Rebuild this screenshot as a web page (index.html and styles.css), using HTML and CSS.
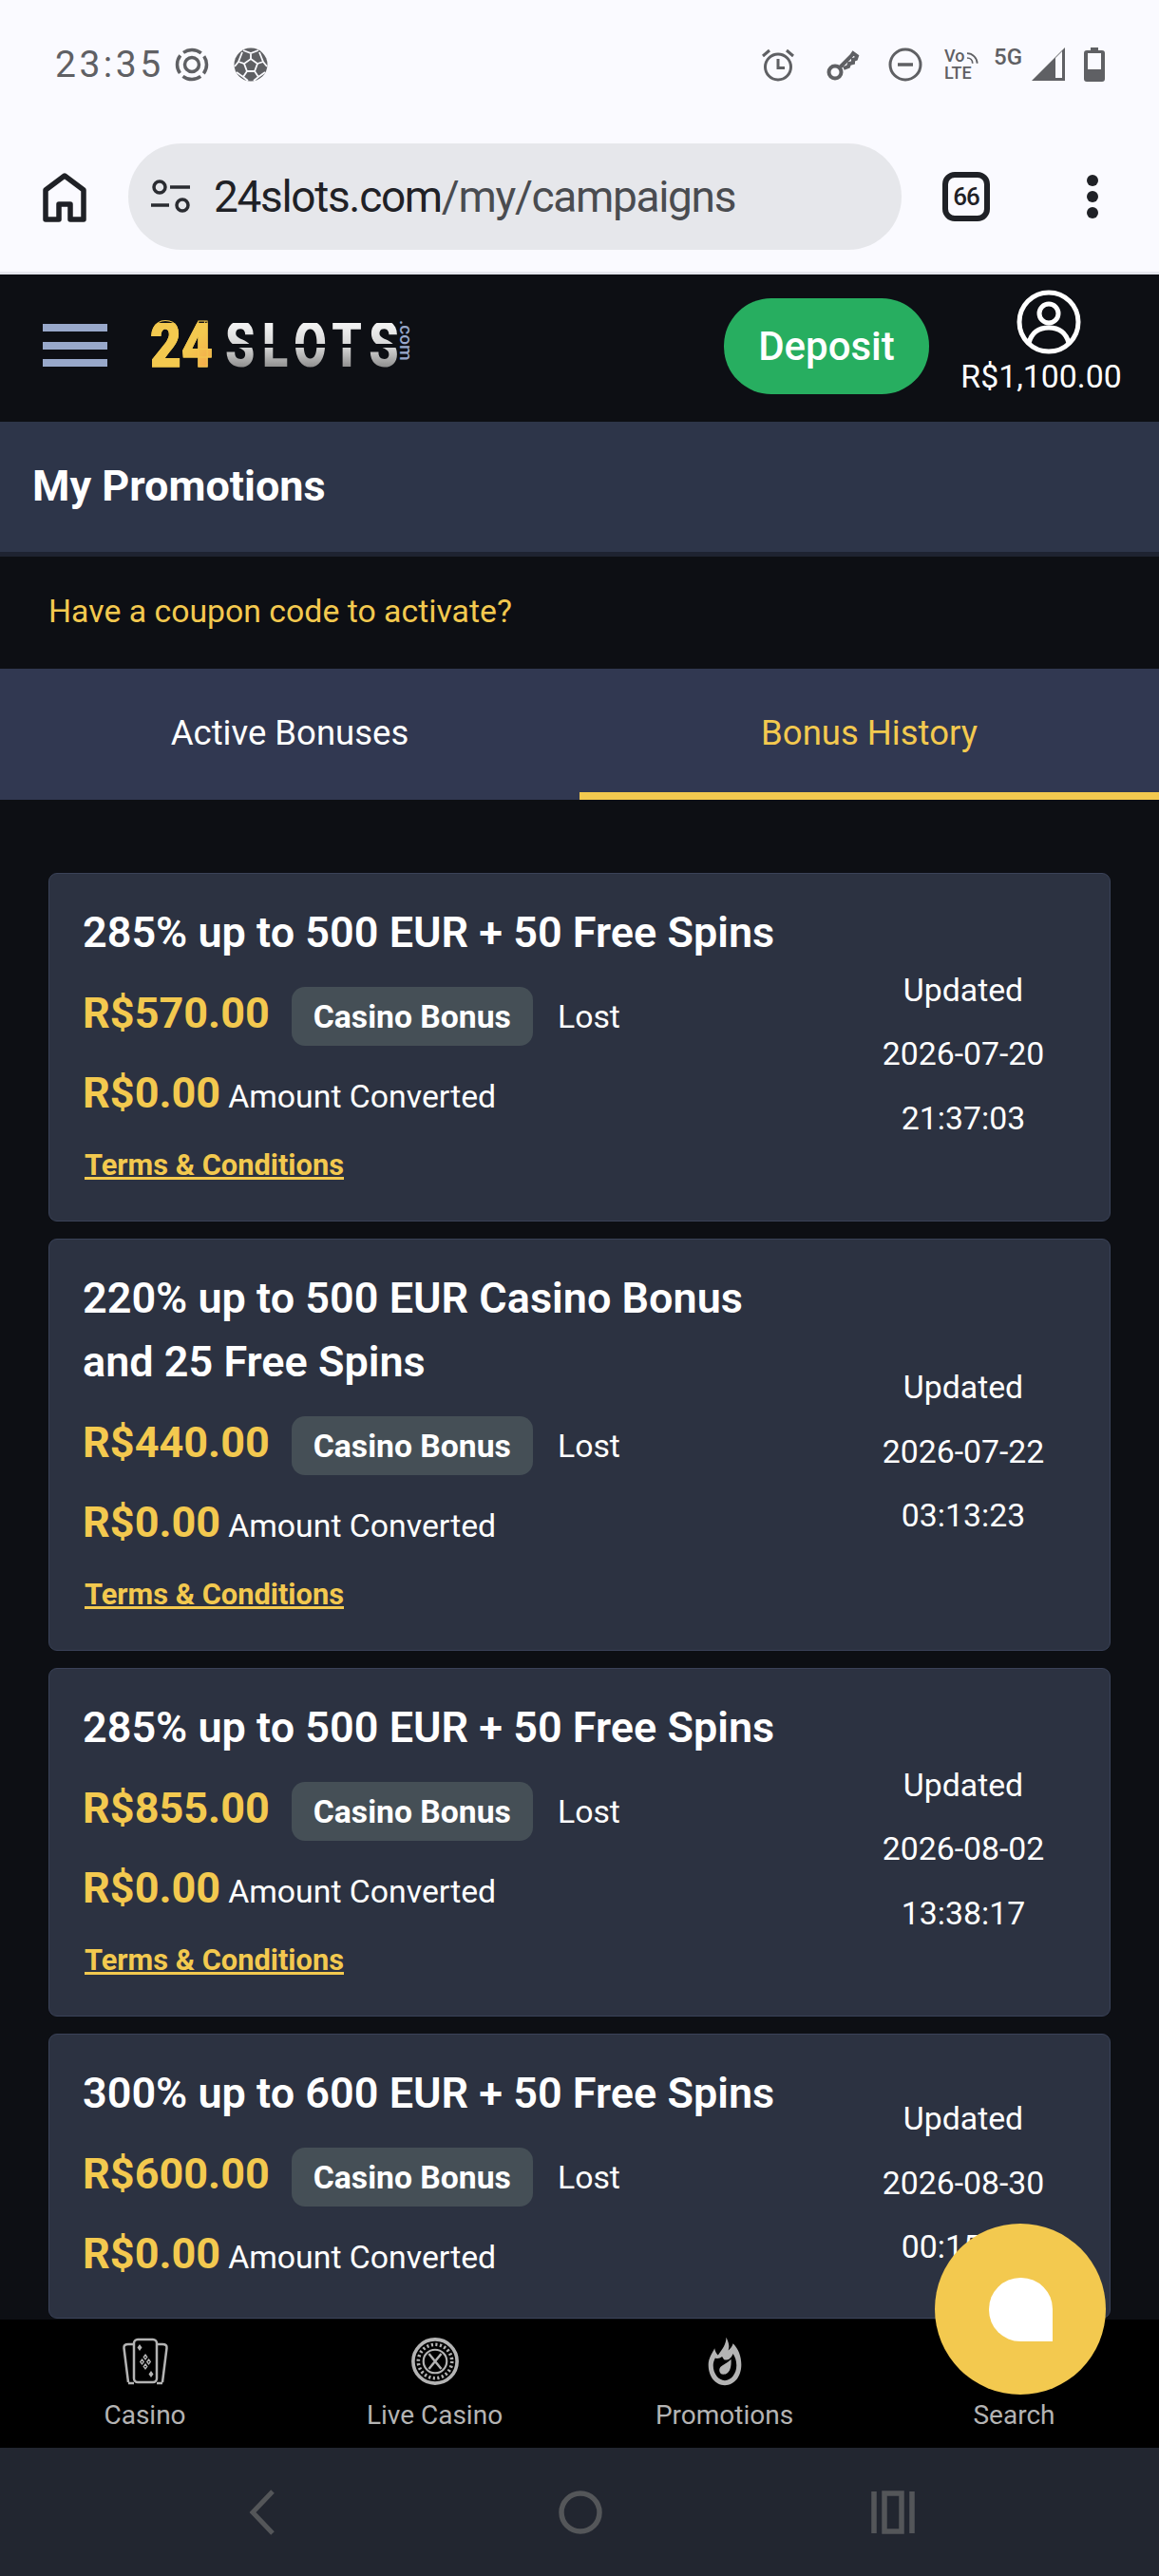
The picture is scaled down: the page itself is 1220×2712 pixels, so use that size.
FILE: index.html
```html
<!DOCTYPE html>
<html lang="en">
<head>
<meta charset="utf-8">
<title>My Promotions</title>
<link rel="stylesheet" href="styles.css">
</head>
<body>
<div class="screen">
  <div class="statusbar">
    <div class="status-left">
      <span class="clock">23:35</span>
      <svg class="si" viewBox="0 0 36 36"><circle cx="18" cy="18" r="15.500" fill="none" stroke="#5f6064" stroke-width="3.500" stroke-dasharray="20 4.350" stroke-dashoffset="10"/><circle cx="18" cy="18" r="7.500" fill="none" stroke="#5f6064" stroke-width="3.500"/></svg>
      <svg class="si ball" viewBox="0 0 36 36"><circle cx="18" cy="18" r="17.500" fill="#5f6064"/><g fill="none" stroke="#fafaff" stroke-width="1.800"><path d="M18 12l7 5-3 8h-8l-3-8z"/><path d="M18 12V6M10 3l8 3 8-3M25 17l6-2M27 5l4 10 4 5M22 25l4 6M33 26l-7 5-5 4M14 25l-4 6M3 26l7 5 5 4M11 17l-6-2M9 5L5 15l-4 5"/></g></svg>
    </div>
    <div class="status-right">
      <svg class="si alarm" viewBox="0 0 36 36" fill="none" stroke="#5f6064" stroke-width="3"><circle cx="18" cy="20.500" r="13.500"/><path d="M18 12v9.500h7M2 9l7-6M34 9l-7-6"/></svg>
      <svg class="si key" viewBox="0 0 36 36" fill="none" stroke="#5f6064" stroke-width="4"><circle cx="10" cy="26" r="6.500"/><path d="M15 21L27 9l2-3 4 3-1 3-3 1v3l-4 1-1 3-5 2"/></svg>
      <svg class="si minus" viewBox="0 0 36 36" fill="none" stroke="#5f6064" stroke-width="3"><circle cx="18" cy="18" r="16"/><path d="M10 18h16" stroke-width="3.500"/></svg>
      <div class="volte"><span class="vo">Vo<svg class="waves" viewBox="0 0 14 14" fill="none" stroke="#5f6064" stroke-width="1.800"><path d="M1 2c6 0 11 5 11 11M1 7c3.500 0 6 2.500 6 6"/></svg></span><span class="lte">LTE</span></div>
      <span class="fiveg">5G</span>
      <svg class="signal" viewBox="0 0 35 36"><path d="M0 35L35 0v35z" fill="#5f6064"/><path d="M25 11l7-7v28h-7z" fill="#fafaff"/></svg>
      <svg class="battery" viewBox="0 0 22 36"><path d="M7 0h8v3h4q3 0 3 3v27q0 3-3 3H3q-3 0-3-3V6q0-3 3-3h4z" fill="#5f6064"/><rect x="4" y="6" width="14" height="17" fill="#fafaff"/></svg>
    </div>
  </div>

  <div class="toolbar">
    <svg class="home" viewBox="0 0 46 52" fill="none" stroke="#1f2126" stroke-width="5.500" stroke-linejoin="round"><path d="M23 3L3 18v31h14V33h12v16h14V18z"/></svg>
    <div class="omnibox">
      <svg class="tune" viewBox="0 0 41 36" fill="none" stroke="#2a2c31" stroke-width="3.500"><circle cx="9" cy="8" r="6"/><path d="M20 8h21M0 27h19"/><circle cx="33" cy="27" r="6"/></svg>
      <span class="url"><span class="host">24slots.com</span>/my/campaigns</span>
    </div>
    <div class="tabcount">66</div>
    <div class="dots"><i></i><i></i><i></i></div>
  </div>

  <header class="sitehead">
    <div class="burger"><i></i><i></i><i></i></div>
    <div class="logo"><span class="logo24"><span>24</span></span><span class="logoslots"><span>SLOTS</span></span><span class="logocom">.com</span></div>
    <a class="deposit">Deposit</a>
    <div class="account">
      <svg class="avatar" viewBox="0 0 68 68" fill="none" stroke="#fff" stroke-width="5"><circle cx="34" cy="34" r="31"/><circle cx="34" cy="25" r="10"/><path d="M13 56c3-11 11-16 21-16s18 5 21 16"/></svg>
      <span class="balance">R$1,100.00</span>
    </div>
  </header>

  <div class="pagetitle">My Promotions</div>
  <div class="coupon">Have a coupon code to activate?</div>
  <nav class="tabs">
    <div class="tab">Active Bonuses</div>
    <div class="tab current">Bonus History</div>
  </nav>

  <main class="list">
    <article class="card">
      <div class="info">
        <h2>285% up to 500 EUR + 50 Free Spins</h2>
        <div class="row"><b class="amt">R$570.00</b><span class="chip">Casino Bonus</span><span class="txt">Lost</span></div>
        <div class="row conv"><b class="amt">R$0.00</b><span class="txt">Amount Converted</span></div>
        <a class="terms">Terms &amp; Conditions</a>
      </div>
      <div class="dates"><span>Updated</span><span>2026-07-20</span><span>21:37:03</span></div>
    </article>
    <article class="card">
      <div class="info">
        <h2>220% up to 500 EUR Casino Bonus and 25 Free Spins</h2>
        <div class="row"><b class="amt">R$440.00</b><span class="chip">Casino Bonus</span><span class="txt">Lost</span></div>
        <div class="row conv"><b class="amt">R$0.00</b><span class="txt">Amount Converted</span></div>
        <a class="terms">Terms &amp; Conditions</a>
      </div>
      <div class="dates"><span>Updated</span><span>2026-07-22</span><span>03:13:23</span></div>
    </article>
    <article class="card">
      <div class="info">
        <h2>285% up to 500 EUR + 50 Free Spins</h2>
        <div class="row"><b class="amt">R$855.00</b><span class="chip">Casino Bonus</span><span class="txt">Lost</span></div>
        <div class="row conv"><b class="amt">R$0.00</b><span class="txt">Amount Converted</span></div>
        <a class="terms">Terms &amp; Conditions</a>
      </div>
      <div class="dates"><span>Updated</span><span>2026-08-02</span><span>13:38:17</span></div>
    </article>
    <article class="card">
      <div class="info">
        <h2>300% up to 600 EUR + 50 Free Spins</h2>
        <div class="row"><b class="amt">R$600.00</b><span class="chip">Casino Bonus</span><span class="txt">Lost</span></div>
        <div class="row conv"><b class="amt">R$0.00</b><span class="txt">Amount Converted</span></div>
      </div>
      <div class="dates"><span>Updated</span><span>2026-08-30</span><span>00:15:42</span></div>
    </article>
  </main>

  <nav class="bottomnav">
    <a class="navitem">
      <svg class="navicon" viewBox="0 0 52 52" fill="none" stroke="#b4b4b4" stroke-width="2.500"><rect x="14" y="3" width="24" height="45" rx="4"/><path d="M13 8H8Q3 8 3.500 12L8 48M39 8h5q5 0 4.500 4L44 48M8 49h6M38 49h6"/><path d="M20 8l2.500 3.500-2.500 3.500-2.500-3.500zM32 36l2.500 3.500-2.500 3.500-2.500-3.500z" fill="#b4b4b4" stroke="none"/><path d="M26 19l1.800 2.500-1.800 2.500-1.800-2.500zM22.500 24l1.800 2.500-1.800 2.500-1.800-2.500zM29.500 24l1.800 2.500-1.800 2.500-1.800-2.500zM26 29l1.800 2.500-1.800 2.500-1.800-2.500z" stroke-width="1.300"/></svg>
      <span>Casino</span>
    </a>
    <a class="navitem">
      <svg class="navicon" viewBox="0 0 72 72" fill="none" stroke="#b4b4b4"><circle cx="36" cy="36" r="32" stroke-width="5"/><circle cx="36" cy="36" r="24.500" stroke-width="5" stroke-dasharray="3 3.400"/><circle cx="36" cy="36" r="17" stroke-width="3"/><path d="M27 25l18 22M45 25L27 47" stroke-width="3.500"/></svg>
      <span>Live Casino</span>
    </a>
    <a class="navitem">
      <svg class="navicon" viewBox="0 0 50 72" fill="none"><path d="M27 1c4 8 5 13 3 19 6-5 6-8 7-10 8 8 12 19 12 31 0 17-10 30-24 30S1 58 1 41c0-10 6-17 9-24 1 5 3 8 5 10 5-7 12-15 12-26z" fill="#b4b4b4"/><path d="M11 31c-2 4-3 7-3 11 0 12 8 22 17 22s17-10 17-22c0-7-2-12-5-17-2 5-6 9-9 9-4 0-4 0-7-5-3 2-6 4-10 2z" fill="#000"/><path d="M34 33c1 11-2 22-11 22-4 0-6-3-6-6 0-8 10-8 17-16z" fill="#b4b4b4"/></svg>
      <span>Promotions</span>
    </a>
    <a class="navitem">
      <span class="navblank"></span>
      <span>Search</span>
    </a>
  </nav>

  <div class="sysnav">
    <svg class="sys back" viewBox="0 0 30 50" fill="none" stroke="#545659" stroke-width="5"><path d="M26 3L5 25l21 22"/></svg>
    <svg class="sys circle" viewBox="0 0 46 46" fill="none" stroke="#545659" stroke-width="5.500"><circle cx="23" cy="23" r="20"/></svg>
    <svg class="sys recent" viewBox="0 0 46 46" fill="none" stroke="#545659"><path d="M3 1v44M43 1v44" stroke-width="5.500"/><rect x="14" y="3" width="18" height="40" stroke-width="5.500"/></svg>
  </div>

  <button class="chat" aria-label="Chat"><span class="bubble"></span></button>
</div>
</body>
</html>
```

FILE: styles.css
```css
* { box-sizing: border-box; }
html, body { margin: 0; padding: 0; background: #0d0f14; }
body { font-family: Roboto, "Liberation Sans", sans-serif; color: #fff; }
h2 { margin: 0; }
a { color: inherit; }

.screen { position: relative; width: 1220px; height: 2712px; display: flex; flex-direction: column; overflow: hidden; }

.statusbar { height: 137px; flex: none; background: #fafaff; display: flex; justify-content: space-between; align-items: flex-start; padding: 50px 57px 0 58px; }
.status-left, .status-right { display: flex; align-items: center; height: 36px; }
.clock { font-size: 39px; letter-spacing: 3.500px; color: #5f6064; margin-right: 11px; }
.si { width: 36px; height: 36px; flex: none; }
.ball { margin-left: 26px; }
.status-right .alarm { margin-right: 32px; }
.status-right .key { margin-right: 30px; }
.status-right .minus { margin-right: 23px; }
.volte { width: 37px; margin-right: 15px; display: flex; flex-direction: column; color: #5f6064; font-size: 18px; font-weight: 500; line-height: 18px; }
.vo { display: flex; align-items: flex-end; }
.waves { width: 14px; height: 14px; margin-left: 2px; }
.fiveg { font-size: 24px; font-weight: 500; color: #5f6064; margin-top: -16px; width: 32px; margin-right: 8px; }
.signal { width: 35px; height: 36px; margin-right: 20px; flex: none; }
.battery { width: 22px; height: 36px; flex: none; }

.toolbar { height: 152px; flex: none; background: #fafaff; border-bottom: 3px solid #e6e7ee; display: flex; align-items: flex-start; padding: 14px 0 0 45px; }
.home { width: 46px; height: 52px; margin-top: 31px; flex: none; }
.omnibox { width: 814px; height: 112px; margin-left: 44px; background: #e6e7eb; border-radius: 56px; display: flex; align-items: center; padding-left: 24px; flex: none; }
.tune { width: 41px; height: 36px; flex: none; }
.url { font-size: 46px; letter-spacing: -1.330px; color: #4a4c50; margin-left: 25px; white-space: nowrap; }
.host { color: #1f2126; }
.tabcount { width: 50px; height: 52px; margin: 30px 0 0 43px; border: 6px solid #1f2126; border-radius: 13px; color: #1f2126; font-size: 26px; font-weight: 500; letter-spacing: -1px; display: flex; align-items: center; justify-content: center; flex: none; }
.dots { display: flex; flex-direction: column; gap: 5px; margin: 33px 0 0 102px; flex: none; }
.dots i { display: block; width: 12px; height: 12px; border-radius: 50%; background: #1f2126; }

.sitehead { height: 155px; flex: none; background: #0d0f14; display: flex; align-items: flex-start; padding-left: 45px; }
.burger { width: 68px; margin-top: 52px; display: flex; flex-direction: column; gap: 10.500px; flex: none; }
.burger i { display: block; height: 8px; background: #98a8ca; }
.logo { margin: 51px 0 0 45px; width: 280px; height: 48px; display: flex; align-items: flex-start; flex: none; font-weight: 900; font-size: 66px; line-height: 48px; }
.logo24 { width: 65px; flex: none; }
.logo24 span { display: inline-block; transform: scaleX(.86); transform-origin: left; color: #f3c94f; background: linear-gradient(135deg, #f3c94f 60%, #f3a34a); -webkit-background-clip: text; background-clip: text; -webkit-text-fill-color: transparent; -webkit-text-stroke: 1px #f3c94f; }
.logoslots { width: 185px; margin-left: 14px; flex: none; }
.logoslots span { display: inline-block; letter-spacing: 10px; transform: scaleX(.76); transform-origin: left; background: linear-gradient(#f4f4f4 0, #d8d8d8 46%, #0d0f14 46%, #0d0f14 54%, #d4d4d4 54%, #8a8a8a 100%); -webkit-background-clip: text; background-clip: text; color: transparent; }
.logocom { writing-mode: vertical-rl; font-size: 19px; line-height: 11px; color: #98a8ca; margin-top: -3px; font-weight: 500; }
.deposit { width: 216px; height: 101px; margin: 25px 0 0 324px; flex: none; border-radius: 50px; background: #27ae60; font-size: 42px; font-weight: 500; display: flex; align-items: center; justify-content: center; }
.account { margin: 16px 0 0 34px; width: 168px; display: flex; flex-direction: column; align-items: center; flex: none; }
.avatar { width: 68px; height: 68px; margin-left: 16px; }
.balance { font-size: 33.800px; line-height: 40px; margin-top: 4px; white-space: nowrap; }

.pagetitle { height: 142px; flex: none; padding: 0 0 3px 34px; background: #2d3549; border-bottom: 5px solid #1e2331; font-size: 45px; font-weight: 700; display: flex; align-items: center; }
.coupon { height: 118px; flex: none; padding: 0 0 3px 51px; background: #0d0f14; color: #f3c94f; font-size: 33.800px; display: flex; align-items: center; }
.tabs { height: 138px; flex: none; background: #313851; display: flex; }
.tab { flex: 1; display: flex; align-items: center; justify-content: center; font-size: 36.500px; padding-top: 4px; border-bottom: 8px solid transparent; }
.tab.current { color: #f3c94f; border-bottom-color: #f3c94f; }

.list { flex: 1; min-height: 0; overflow: hidden; padding: 77px 51px 0; display: flex; flex-direction: column; gap: 18px; background: #0d0f14; }
.card { flex: none; display: flex; align-items: center; background: #2c3241; border: 1px solid #3a4258; border-radius: 9px; padding: 28px 0 40px 35px; }
.info { width: 801px; flex: none; }
.card h2 { font-size: 45px; font-weight: 600; line-height: 67px; max-width: 760px; }
.row { display: flex; align-items: baseline; margin-top: 24px; }
.amt { font-size: 45px; font-weight: 700; color: #f3c94f; }
.chip { margin-left: 23px; height: 62px; padding: 0 23px; border-radius: 14px; background: #454f56; font-size: 33.700px; font-weight: 700; display: flex; align-items: center; }
.txt { font-size: 33.800px; margin-left: 26px; }
.conv { margin-top: 23px; }
.conv .txt { margin-left: 8px; }
.terms { display: block; margin: 32px 0 0 2px; font-size: 30.800px; line-height: 36px; font-weight: 700; color: #f3c94f; text-decoration: underline; }
.dates { width: 256px; flex: none; margin-left: -2px; margin-top: 27px; display: flex; flex-direction: column; align-items: center; font-size: 33.800px; line-height: 67.500px; }

.bottomnav { height: 135px; flex: none; background: #000; display: flex; align-items: flex-start; padding-top: 18px; color: #b4b4b4; font-size: 28px; }
.navitem { width: 305px; display: flex; flex-direction: column; align-items: center; }
.navicon { height: 52px; width: 52px; margin-bottom: 14px; }
.navblank { height: 52px; margin-bottom: 14px; }

.sysnav { height: 135px; flex: none; background: #222630; display: flex; align-items: center; }
.sys { flex: none; }
.back { width: 30px; height: 50px; margin-left: 261px; }
.circle { width: 46px; height: 46px; margin-left: 297px; }
.recent { width: 46px; height: 46px; margin-left: 283px; }

.chat { position: absolute; left: 984px; top: 2341px; width: 180px; height: 180px; border: 0; border-radius: 50%; background: #f3c94f; padding: 0; }
.bubble { display: block; position: absolute; left: 57px; top: 57px; width: 67px; height: 67px; background: #fff; border-radius: 33px 33px 0 33px; }
```
